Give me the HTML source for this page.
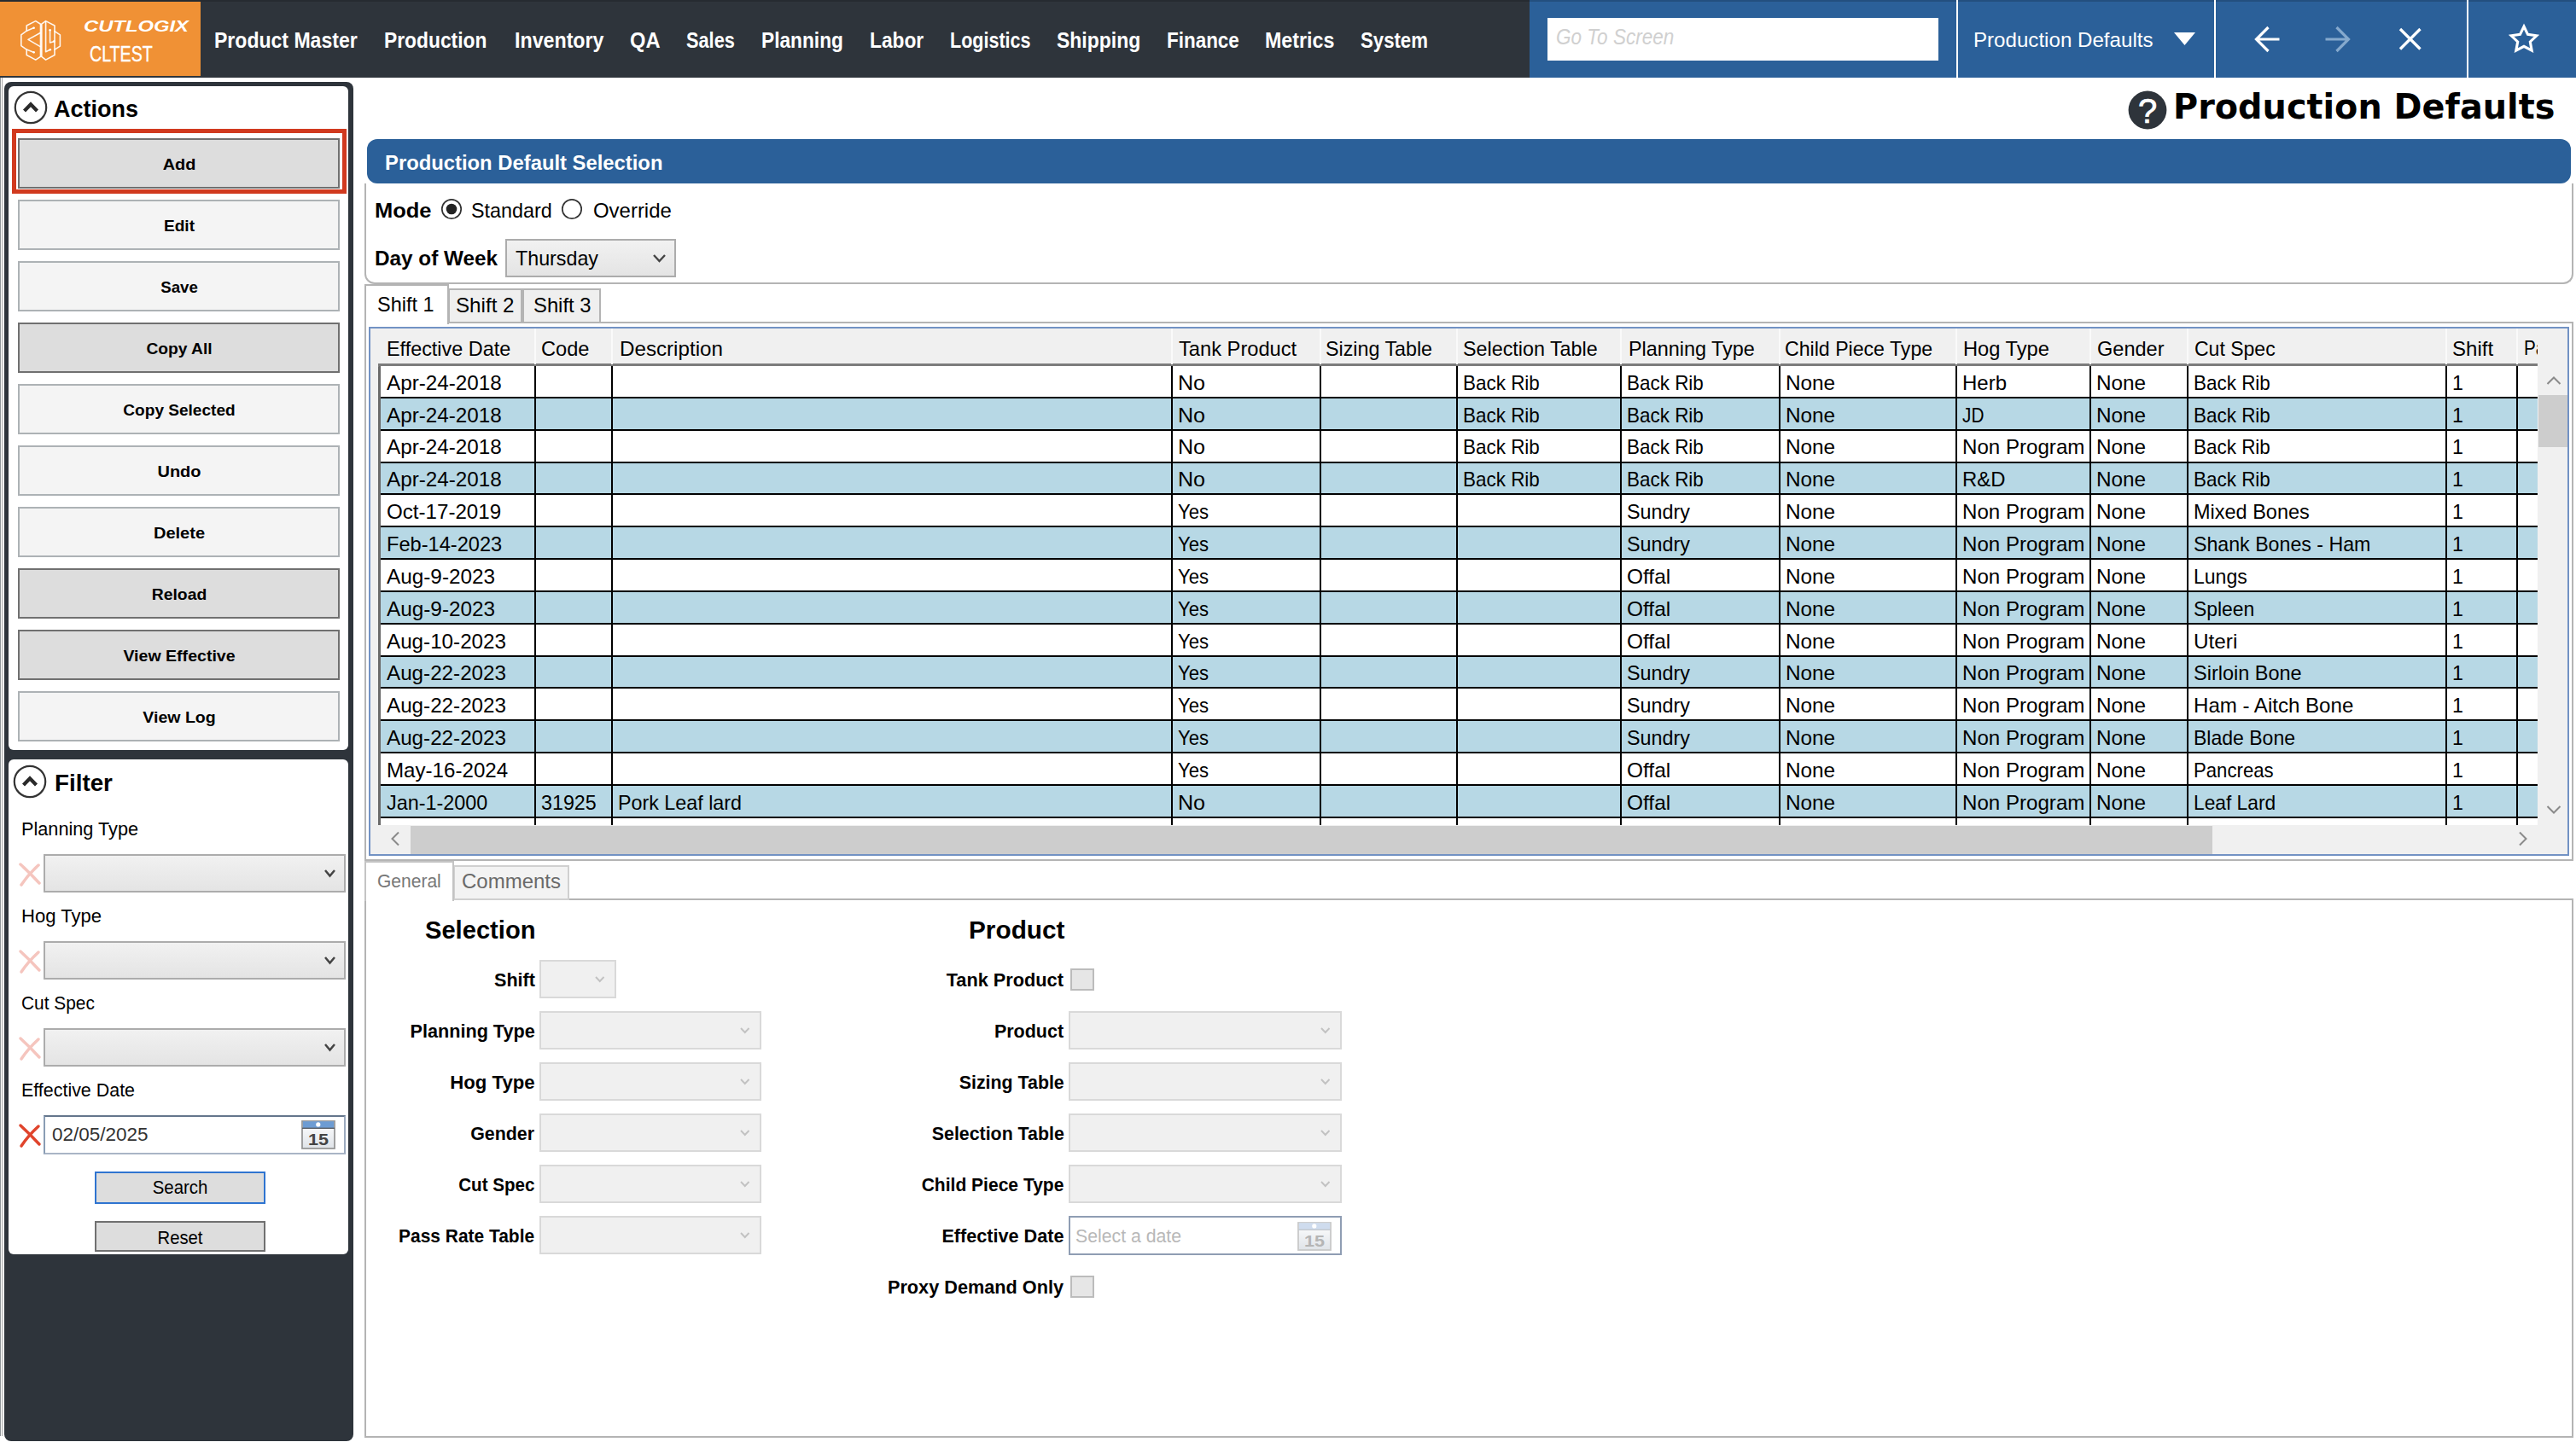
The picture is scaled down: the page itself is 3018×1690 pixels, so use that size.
<!DOCTYPE html>
<html><head><meta charset="utf-8"><title>Production Defaults</title>
<style>
html,body{margin:0;padding:0;background:#fff}
body{width:3018px;height:1690px;position:relative;overflow:hidden;font-family:"Liberation Sans",sans-serif}
body div,body svg{position:absolute}
.t{white-space:nowrap;line-height:1}
</style></head><body>
<div style="left:0px;top:0px;width:3018px;height:91px;background:#2e343b"></div>
<div style="left:0px;top:2px;width:235px;height:87px;background:#f09135"></div>
<div style="left:1792px;top:0px;width:1226px;height:91px;background:#2b6099"></div>
<svg style="left:14px;top:14px" width="70" height="68" viewBox="0 0 70 68" fill="none" stroke="#fff" stroke-opacity=".92" stroke-width="1.6" stroke-linejoin="round" stroke-linecap="round">
<path d="M27.8 10.6 L33.5 14.2 L33.5 52.4 L27.8 56.1 L17.2 50.5 L17.2 44.1 L10.8 39.6 L10.8 26.9 L17.2 22.2 L17.2 16 Z"/>
<path d="M39.6 10.6 L34.8 14.2 L34.8 52.4 L39.6 56.1 L50 50.5 L50 44.1 L56.4 40.1 L56.4 26.9 L50 22.6 L50 16 Z"/>
<path d="M17.2 22.2 L25.8 18.6 M33.2 24.5 L19 32.4 L33.2 40.6 M17.2 44.1 L25.8 47.4"/>
<path d="M39.6 11.5 L39.6 46.7 L45.2 44"/>
<path d="M44.6 21.2 L44.6 36 L49.6 34.4 M50 22.6 L50 44.1"/>
<circle cx="25.6" cy="18.8" r="1.3" fill="#fff" stroke="none"/><circle cx="25.6" cy="47.3" r="1.3" fill="#fff" stroke="none"/>
<circle cx="44.6" cy="21.2" r="1.3" fill="#fff" stroke="none"/><circle cx="49.4" cy="34.4" r="1.3" fill="#fff" stroke="none"/><circle cx="44.8" cy="44.2" r="1.3" fill="#fff" stroke="none"/>
</svg>
<div class="t" style="left:98.0px;top:21.5px;font-family:'Liberation Sans',sans-serif;font-weight:700;font-style:italic;font-size:18.5px;color:#fff;transform:scaleX(1.2861);transform-origin:0 0;">CUTLOGIX</div>
<div class="t" style="left:105.0px;top:50.6px;font-family:'Liberation Sans',sans-serif;font-weight:400;font-style:normal;font-size:25px;color:#fff;transform:scaleX(0.7838);transform-origin:0 0;-webkit-text-stroke:.35px #fff;">CLTEST</div>
<div class="t" style="left:251.0px;top:35.1px;font-family:'Liberation Sans',sans-serif;font-weight:700;font-style:normal;font-size:25px;color:#fff;transform:scaleX(0.9214);transform-origin:0 0;">Product Master</div>
<div class="t" style="left:450.0px;top:35.1px;font-family:'Liberation Sans',sans-serif;font-weight:700;font-style:normal;font-size:25px;color:#fff;transform:scaleX(0.9123);transform-origin:0 0;">Production</div>
<div class="t" style="left:602.7px;top:35.1px;font-family:'Liberation Sans',sans-serif;font-weight:700;font-style:normal;font-size:25px;color:#fff;transform:scaleX(0.9286);transform-origin:0 0;">Inventory</div>
<div class="t" style="left:738.4px;top:35.1px;font-family:'Liberation Sans',sans-serif;font-weight:700;font-style:normal;font-size:25px;color:#fff;transform:scaleX(0.9472);transform-origin:0 0;">QA</div>
<div class="t" style="left:804.0px;top:35.1px;font-family:'Liberation Sans',sans-serif;font-weight:700;font-style:normal;font-size:25px;color:#fff;transform:scaleX(0.8695);transform-origin:0 0;">Sales</div>
<div class="t" style="left:891.5px;top:35.1px;font-family:'Liberation Sans',sans-serif;font-weight:700;font-style:normal;font-size:25px;color:#fff;transform:scaleX(0.9082);transform-origin:0 0;">Planning</div>
<div class="t" style="left:1018.6px;top:35.1px;font-family:'Liberation Sans',sans-serif;font-weight:700;font-style:normal;font-size:25px;color:#fff;transform:scaleX(0.9095);transform-origin:0 0;">Labor</div>
<div class="t" style="left:1112.6px;top:35.1px;font-family:'Liberation Sans',sans-serif;font-weight:700;font-style:normal;font-size:25px;color:#fff;transform:scaleX(0.8610);transform-origin:0 0;">Logistics</div>
<div class="t" style="left:1238.0px;top:35.1px;font-family:'Liberation Sans',sans-serif;font-weight:700;font-style:normal;font-size:25px;color:#fff;transform:scaleX(0.9182);transform-origin:0 0;">Shipping</div>
<div class="t" style="left:1367.0px;top:35.1px;font-family:'Liberation Sans',sans-serif;font-weight:700;font-style:normal;font-size:25px;color:#fff;transform:scaleX(0.8981);transform-origin:0 0;">Finance</div>
<div class="t" style="left:1482.3px;top:35.1px;font-family:'Liberation Sans',sans-serif;font-weight:700;font-style:normal;font-size:25px;color:#fff;transform:scaleX(0.9298);transform-origin:0 0;">Metrics</div>
<div class="t" style="left:1594.2px;top:35.1px;font-family:'Liberation Sans',sans-serif;font-weight:700;font-style:normal;font-size:25px;color:#fff;transform:scaleX(0.8875);transform-origin:0 0;">System</div>
<div style="left:0px;top:0px;width:3018px;height:1.5px;background:rgba(0,0,0,.17)"></div>
<div style="left:1813px;top:20.5px;width:458px;height:50.5px;background:#fff"></div>
<div class="t" style="left:1822.5px;top:31.1px;font-family:'Liberation Sans',sans-serif;font-weight:400;font-style:italic;font-size:25px;color:#d0d0d0;transform:scaleX(0.9023);transform-origin:0 0;">Go To Screen</div>
<div style="left:2292px;top:0px;width:2px;height:91px;background:#fff"></div>
<div style="left:2594px;top:0px;width:2px;height:91px;background:#fff"></div>
<div style="left:2890px;top:0px;width:2px;height:91px;background:#fff"></div>
<div class="t" style="left:2312.0px;top:34.7px;font-family:'Liberation Sans',sans-serif;font-weight:400;font-style:normal;font-size:24px;color:#fff;transform:scaleX(1.0050);transform-origin:0 0;">Production Defaults</div>
<svg style="left:2546px;top:37px" width="28" height="18" viewBox="0 0 28 18"><path d="M1 1 L26 1 L13.5 16 Z" fill="#fff"/></svg>
<svg style="left:2640px;top:29px" width="32" height="34" viewBox="0 0 32 34" fill="none" stroke="#fff" stroke-width="3.2"><path d="M30.5 17 H4 M17.5 3 L3.5 17 L17.5 31"/></svg>
<svg style="left:2723px;top:29px" width="32" height="34" viewBox="0 0 32 34" fill="none" stroke="#85a9cd" stroke-width="3.2"><path d="M1.5 17 H28 M14.5 3 L28.5 17 L14.5 31"/></svg>
<svg style="left:2809px;top:31px" width="30" height="30" viewBox="0 0 30 30" fill="none" stroke="#fff" stroke-width="3.3"><path d="M3 3 L26.5 26.5 M26.5 3 L3 26.5"/></svg>
<svg style="left:2935px;top:24px" width="44" height="44" viewBox="0 0 44 44" fill="none" stroke="#fff" stroke-width="3.1" stroke-linejoin="miter"><path d="M22.0 7.0 L26.5 16.4 L36.8 17.8 L29.3 25.0 L31.2 35.2 L22.0 30.3 L12.8 35.2 L14.7 25.0 L7.2 17.8 L17.5 16.4 Z"/></svg>
<div style="left:0px;top:91px;width:1px;height:1592px;background:#8f9497"></div>
<div style="left:2px;top:91px;width:1px;height:1592px;background:#a6a6a6"></div>
<div style="left:4.7px;top:95.5px;width:409.4px;height:1593px;background:#2e343b;border-radius:8px"></div>
<div style="left:10.3px;top:101px;width:398px;height:778px;background:#fff;border-radius:6px"></div>
<div style="left:10.3px;top:890.3px;width:398px;height:579.7px;background:#fff;border-radius:6px"></div>
<svg style="left:14.5px;top:105.3px" width="42" height="42" viewBox="0 0 42 42" fill="none"><circle cx="21" cy="21" r="18.2" stroke="#333" stroke-width="2.2"/><path d="M13.5 25 L21 17.2 L28.5 25" stroke="#2a2a2a" stroke-width="4.2"/></svg>
<div class="t" style="left:62.5px;top:114.1px;font-family:'Liberation Sans',sans-serif;font-weight:700;font-style:normal;font-size:28px;color:#000;transform:scaleX(0.9637);transform-origin:0 0;">Actions</div>
<svg style="left:14.299999999999997px;top:895px" width="42" height="42" viewBox="0 0 42 42" fill="none"><circle cx="21" cy="21" r="18.2" stroke="#333" stroke-width="2.2"/><path d="M13.5 25 L21 17.2 L28.5 25" stroke="#2a2a2a" stroke-width="4.2"/></svg>
<div class="t" style="left:63.6px;top:903.9px;font-family:'Liberation Sans',sans-serif;font-weight:700;font-style:normal;font-size:28px;color:#000;transform:scaleX(0.9917);transform-origin:0 0;">Filter</div>
<div style="left:14px;top:151px;width:392px;height:76px;border:5px solid #d13a1f;box-sizing:border-box"></div>
<div style="left:21px;top:162px;width:377px;height:59px;background:#ddd;border:2px solid #707070;box-sizing:border-box"></div>
<div class="t" style="left:-790.5px;width:2000px;text-align:center;top:182.5px;font-family:'Liberation Sans',sans-serif;font-weight:700;font-style:normal;font-size:19px;color:#000;transform:scaleX(1.0460);transform-origin:50% 0;">Add</div>
<div style="left:21px;top:234px;width:377px;height:59px;background:#f4f4f4;border:2px solid #adb2b5;box-sizing:border-box"></div>
<div class="t" style="left:-790.5px;width:2000px;text-align:center;top:254.5px;font-family:'Liberation Sans',sans-serif;font-weight:700;font-style:normal;font-size:19px;color:#000;transform:scaleX(1.0055);transform-origin:50% 0;">Edit</div>
<div style="left:21px;top:306px;width:377px;height:59px;background:#f4f4f4;border:2px solid #adb2b5;box-sizing:border-box"></div>
<div class="t" style="left:-790.5px;width:2000px;text-align:center;top:326.5px;font-family:'Liberation Sans',sans-serif;font-weight:700;font-style:normal;font-size:19px;color:#000;transform:scaleX(0.9824);transform-origin:50% 0;">Save</div>
<div style="left:21px;top:378px;width:377px;height:59px;background:#ddd;border:2px solid #707070;box-sizing:border-box"></div>
<div class="t" style="left:-790.5px;width:2000px;text-align:center;top:398.5px;font-family:'Liberation Sans',sans-serif;font-weight:700;font-style:normal;font-size:19px;color:#000;transform:scaleX(1.0107);transform-origin:50% 0;">Copy All</div>
<div style="left:21px;top:450px;width:377px;height:59px;background:#f4f4f4;border:2px solid #adb2b5;box-sizing:border-box"></div>
<div class="t" style="left:-790.5px;width:2000px;text-align:center;top:470.5px;font-family:'Liberation Sans',sans-serif;font-weight:700;font-style:normal;font-size:19px;color:#000;transform:scaleX(1.0027);transform-origin:50% 0;">Copy Selected</div>
<div style="left:21px;top:522px;width:377px;height:59px;background:#f4f4f4;border:2px solid #adb2b5;box-sizing:border-box"></div>
<div class="t" style="left:-790.5px;width:2000px;text-align:center;top:542.5px;font-family:'Liberation Sans',sans-serif;font-weight:700;font-style:normal;font-size:19px;color:#000;transform:scaleX(1.0514);transform-origin:50% 0;">Undo</div>
<div style="left:21px;top:594px;width:377px;height:59px;background:#f4f4f4;border:2px solid #adb2b5;box-sizing:border-box"></div>
<div class="t" style="left:-790.5px;width:2000px;text-align:center;top:614.5px;font-family:'Liberation Sans',sans-serif;font-weight:700;font-style:normal;font-size:19px;color:#000;transform:scaleX(1.0555);transform-origin:50% 0;">Delete</div>
<div style="left:21px;top:666px;width:377px;height:59px;background:#ddd;border:2px solid #707070;box-sizing:border-box"></div>
<div class="t" style="left:-790.5px;width:2000px;text-align:center;top:686.5px;font-family:'Liberation Sans',sans-serif;font-weight:700;font-style:normal;font-size:19px;color:#000;transform:scaleX(1.0175);transform-origin:50% 0;">Reload</div>
<div style="left:21px;top:738px;width:377px;height:59px;background:#ddd;border:2px solid #707070;box-sizing:border-box"></div>
<div class="t" style="left:-790.5px;width:2000px;text-align:center;top:758.5px;font-family:'Liberation Sans',sans-serif;font-weight:700;font-style:normal;font-size:19px;color:#000;transform:scaleX(1.0299);transform-origin:50% 0;">View Effective</div>
<div style="left:21px;top:810px;width:377px;height:59px;background:#f4f4f4;border:2px solid #adb2b5;box-sizing:border-box"></div>
<div class="t" style="left:-790.5px;width:2000px;text-align:center;top:830.5px;font-family:'Liberation Sans',sans-serif;font-weight:700;font-style:normal;font-size:19px;color:#000;transform:scaleX(1.0283);transform-origin:50% 0;">View Log</div>
<div class="t" style="left:25.3px;top:960.9px;font-family:'Liberation Sans',sans-serif;font-weight:400;font-style:normal;font-size:22px;color:#000;transform:scaleX(0.9856);transform-origin:0 0;">Planning Type</div>
<div class="t" style="left:25.3px;top:1062.9px;font-family:'Liberation Sans',sans-serif;font-weight:400;font-style:normal;font-size:22px;color:#000;transform:scaleX(1.0031);transform-origin:0 0;">Hog Type</div>
<div class="t" style="left:25.3px;top:1164.9px;font-family:'Liberation Sans',sans-serif;font-weight:400;font-style:normal;font-size:22px;color:#000;transform:scaleX(0.9484);transform-origin:0 0;">Cut Spec</div>
<div class="t" style="left:25.3px;top:1267.4px;font-family:'Liberation Sans',sans-serif;font-weight:400;font-style:normal;font-size:22px;color:#000;transform:scaleX(0.9740);transform-origin:0 0;">Effective Date</div>
<svg style="left:21px;top:1010px" width="28" height="30" viewBox="0 0 28 30" fill="none" stroke="#f5c5be" stroke-width="3.5" stroke-linecap="round"><path d="M3 3 Q14 13 25 25 M24 4 Q12 15 4 27"/></svg>
<div style="left:51px;top:1001px;width:354px;height:45px;background:linear-gradient(#f1f1f1,#e4e4e4);border:2px solid #acacac;box-sizing:border-box"></div>
<svg style="left:378.5px;top:1017.5px" width="15" height="11.5" viewBox="0 0 15 11.5" fill="none" stroke="#444" stroke-width="2.5"><path d="M2 2 L7.5 8.5 L13 2"/></svg>
<svg style="left:21px;top:1112px" width="28" height="30" viewBox="0 0 28 30" fill="none" stroke="#f5c5be" stroke-width="3.5" stroke-linecap="round"><path d="M3 3 Q14 13 25 25 M24 4 Q12 15 4 27"/></svg>
<div style="left:51px;top:1103px;width:354px;height:45px;background:linear-gradient(#f1f1f1,#e4e4e4);border:2px solid #acacac;box-sizing:border-box"></div>
<svg style="left:378.5px;top:1119.5px" width="15" height="11.5" viewBox="0 0 15 11.5" fill="none" stroke="#444" stroke-width="2.5"><path d="M2 2 L7.5 8.5 L13 2"/></svg>
<svg style="left:21px;top:1214px" width="28" height="30" viewBox="0 0 28 30" fill="none" stroke="#f5c5be" stroke-width="3.5" stroke-linecap="round"><path d="M3 3 Q14 13 25 25 M24 4 Q12 15 4 27"/></svg>
<div style="left:51px;top:1205px;width:354px;height:45px;background:linear-gradient(#f1f1f1,#e4e4e4);border:2px solid #acacac;box-sizing:border-box"></div>
<svg style="left:378.5px;top:1221.5px" width="15" height="11.5" viewBox="0 0 15 11.5" fill="none" stroke="#444" stroke-width="2.5"><path d="M2 2 L7.5 8.5 L13 2"/></svg>
<svg style="left:21px;top:1316px" width="28" height="30" viewBox="0 0 28 30" fill="none" stroke="#e0442c" stroke-width="3.5" stroke-linecap="round"><path d="M3 3 Q14 13 25 25 M24 4 Q12 15 4 27"/></svg>
<div style="left:51px;top:1307px;width:354px;height:46px;background:#fff;border:2px solid #8a9db5;border-top-color:#64768c;border-bottom-color:#a9b5c6;border-right-color:#9dabbf;box-sizing:border-box"></div>
<div class="t" style="left:60.5px;top:1318.9px;font-family:'Liberation Sans',sans-serif;font-weight:400;font-style:normal;font-size:22px;color:#333;transform:scaleX(1.0220);transform-origin:0 0;">02/05/2025</div>
<svg style="left:352.5px;top:1313px" width="40" height="34" viewBox="0 0 40 34"><defs><linearGradient id="cg0" x1="0" y1="0" x2="0" y2="1"><stop offset="0" stop-color="#fff"/><stop offset="1" stop-color="#dfe3e8"/></linearGradient></defs><rect x="1" y="1" width="38" height="32" fill="url(#cg0)" stroke="#979797" stroke-width="1.8"/><rect x="1.9" y="1.2" width="36.2" height="7.8" fill="#6d9cd3"/><rect x="1" y="8.6" width="38" height="1.4" fill="#5a6068"/><circle cx="19.8" cy="4.9" r="2.6" fill="#fff"/><text x="20" y="29.2" text-anchor="middle" font-family="Liberation Sans,sans-serif" font-weight="700" font-size="19" fill="#444" textLength="24" lengthAdjust="spacingAndGlyphs">15</text></svg>
<div style="left:111px;top:1373px;width:200px;height:38px;background:#ddd;border:2px solid #2f74d0;box-sizing:border-box"></div>
<div class="t" style="left:-789.0px;width:2000px;text-align:center;top:1381.4px;font-family:'Liberation Sans',sans-serif;font-weight:400;font-style:normal;font-size:22px;color:#000;transform:scaleX(0.9273);transform-origin:50% 0;">Search</div>
<div style="left:111px;top:1431px;width:200px;height:36px;background:#ddd;border:2px solid #707070;box-sizing:border-box"></div>
<div class="t" style="left:-789.0px;width:2000px;text-align:center;top:1439.9px;font-family:'Liberation Sans',sans-serif;font-weight:400;font-style:normal;font-size:22px;color:#000;transform:scaleX(0.9215);transform-origin:50% 0;">Reset</div>
<svg style="left:2493px;top:106px" width="46" height="46" viewBox="0 0 46 46"><circle cx="23" cy="23" r="22.4" fill="#2e343b"/><text x="23.2" y="37.8" text-anchor="middle" font-family="Liberation Sans,sans-serif" font-weight="400" font-size="40" fill="#fff" stroke="#fff" stroke-width=".7">?</text></svg>
<div class="t" style="left:2545.5px;top:105.3px;font-family:'DejaVu Sans',sans-serif;font-weight:700;font-style:normal;font-size:40.2px;color:#000;transform:scaleX(0.9897);transform-origin:0 0;">Production Defaults</div>
<div style="left:430px;top:163px;width:2582px;height:52px;background:#2b6099;border-radius:12px"></div>
<div class="t" style="left:451.0px;top:178.8px;font-family:'Liberation Sans',sans-serif;font-weight:700;font-style:normal;font-size:24.5px;color:#fff;transform:scaleX(0.9719);transform-origin:0 0;">Production Default Selection</div>
<div style="left:427px;top:215px;width:2588px;height:118px;border:2px solid #b4b4b4;border-top:none;border-radius:0 0 12px 12px;box-sizing:border-box"></div>
<div class="t" style="left:439.0px;top:235.1px;font-family:'Liberation Sans',sans-serif;font-weight:700;font-style:normal;font-size:24px;color:#000;transform:scaleX(1.0611);transform-origin:0 0;">Mode</div>
<svg style="left:515.6px;top:232.4px" width="26" height="26" viewBox="0 0 26 26"><circle cx="13" cy="13" r="11.2" fill="#fff" stroke="#333" stroke-width="1.7"/><circle cx="13" cy="13" r="6.3" fill="#222"/></svg>
<div class="t" style="left:552.0px;top:235.1px;font-family:'Liberation Sans',sans-serif;font-weight:400;font-style:normal;font-size:24px;color:#000;transform:scaleX(0.9718);transform-origin:0 0;">Standard</div>
<svg style="left:657.2px;top:232.4px" width="26" height="26" viewBox="0 0 26 26"><circle cx="13" cy="13" r="11.2" fill="#fff" stroke="#333" stroke-width="1.7"/></svg>
<div class="t" style="left:694.7px;top:235.1px;font-family:'Liberation Sans',sans-serif;font-weight:400;font-style:normal;font-size:24px;color:#000;transform:scaleX(0.9975);transform-origin:0 0;">Override</div>
<div class="t" style="left:439.0px;top:291.2px;font-family:'Liberation Sans',sans-serif;font-weight:700;font-style:normal;font-size:24px;color:#000;transform:scaleX(1.0122);transform-origin:0 0;">Day of Week</div>
<div style="left:592px;top:280px;width:200px;height:45px;background:linear-gradient(#f1f1f1,#e4e4e4);border:2px solid #acacac;box-sizing:border-box"></div>
<div class="t" style="left:604.0px;top:291.2px;font-family:'Liberation Sans',sans-serif;font-weight:400;font-style:normal;font-size:24px;color:#000;transform:scaleX(0.9691);transform-origin:0 0;">Thursday</div>
<svg style="left:764px;top:297px" width="17" height="12" viewBox="0 0 17 12" fill="none" stroke="#444" stroke-width="2.4"><path d="M2 2 L8.5 9 L15 2"/></svg>
<div style="left:427px;top:377px;width:2588px;height:2px;background:#b4b4b4"></div>
<div style="left:525px;top:338px;width:87px;height:41px;background:#efefef;border:2px solid #b4b4b4;box-sizing:border-box"></div>
<div style="left:612px;top:338px;width:92px;height:41px;background:#efefef;border:2px solid #b4b4b4;box-sizing:border-box"></div>
<div style="left:427px;top:333px;width:99px;height:47px;background:#fff;border:2px solid #b4b4b4;border-bottom:none;box-sizing:border-box"></div>
<div class="t" style="left:442.3px;top:344.7px;font-family:'Liberation Sans',sans-serif;font-weight:400;font-style:normal;font-size:24px;color:#000;transform:scaleX(0.9769);transform-origin:0 0;">Shift 1</div>
<div class="t" style="left:533.5px;top:346.1px;font-family:'Liberation Sans',sans-serif;font-weight:400;font-style:normal;font-size:24px;color:#000;transform:scaleX(1.0069);transform-origin:0 0;">Shift 2</div>
<div class="t" style="left:624.8px;top:346.1px;font-family:'Liberation Sans',sans-serif;font-weight:400;font-style:normal;font-size:24px;color:#000;transform:scaleX(0.9919);transform-origin:0 0;">Shift 3</div>
<div style="left:427px;top:379px;width:2px;height:630px;background:#b4b4b4"></div>
<div style="left:3013px;top:379px;width:2px;height:630px;background:#b4b4b4"></div>
<div style="left:427px;top:1007px;width:2588px;height:2px;background:#b4b4b4"></div>
<div style="left:432px;top:383px;width:2578px;height:620px;background:#fff;border:2px solid #7292c4;box-sizing:border-box"></div>
<div style="left:434px;top:385px;width:2574px;height:42px;background:#f0f0f0"></div>
<div style="left:434px;top:427px;width:2539px;height:540px;overflow:hidden">
<div style="left:12px;top:38.85000000000002px;width:2527px;height:38px;background:#b7d8e5"></div>
<div style="left:12px;top:114.54999999999995px;width:2527px;height:38px;background:#b7d8e5"></div>
<div style="left:12px;top:190.25px;width:2527px;height:38px;background:#b7d8e5"></div>
<div style="left:12px;top:265.95000000000005px;width:2527px;height:38px;background:#b7d8e5"></div>
<div style="left:12px;top:341.6500000000001px;width:2527px;height:38px;background:#b7d8e5"></div>
<div style="left:12px;top:417.35px;width:2527px;height:38px;background:#b7d8e5"></div>
<div style="left:12px;top:493.04999999999995px;width:2527px;height:38px;background:#b7d8e5"></div>
<div style="left:12px;top:37.80000000000001px;width:2527px;height:2px;background:#000"></div>
<div style="left:12px;top:75.65000000000003px;width:2527px;height:2px;background:#000"></div>
<div style="left:12px;top:113.5px;width:2527px;height:2px;background:#000"></div>
<div style="left:12px;top:151.35000000000002px;width:2527px;height:2px;background:#000"></div>
<div style="left:12px;top:189.20000000000005px;width:2527px;height:2px;background:#000"></div>
<div style="left:12px;top:227.04999999999995px;width:2527px;height:2px;background:#000"></div>
<div style="left:12px;top:264.9000000000001px;width:2527px;height:2px;background:#000"></div>
<div style="left:12px;top:302.75px;width:2527px;height:2px;background:#000"></div>
<div style="left:12px;top:340.6px;width:2527px;height:2px;background:#000"></div>
<div style="left:12px;top:378.45000000000005px;width:2527px;height:2px;background:#000"></div>
<div style="left:12px;top:416.29999999999995px;width:2527px;height:2px;background:#000"></div>
<div style="left:12px;top:454.1500000000001px;width:2527px;height:2px;background:#000"></div>
<div style="left:12px;top:492.0px;width:2527px;height:2px;background:#000"></div>
<div style="left:12px;top:529.85px;width:2527px;height:2px;background:#000"></div>
<div style="left:12px;top:567.7px;width:2527px;height:2px;background:#000"></div>
<div style="left:192px;top:2px;width:2px;height:600px;background:#000"></div>
<div style="left:282px;top:2px;width:2px;height:600px;background:#000"></div>
<div style="left:938px;top:2px;width:2px;height:600px;background:#000"></div>
<div style="left:1112px;top:2px;width:2px;height:600px;background:#000"></div>
<div style="left:1272px;top:2px;width:2px;height:600px;background:#000"></div>
<div style="left:1464px;top:2px;width:2px;height:600px;background:#000"></div>
<div style="left:1650px;top:2px;width:2px;height:600px;background:#000"></div>
<div style="left:1857px;top:2px;width:2px;height:600px;background:#000"></div>
<div style="left:2014px;top:2px;width:2px;height:600px;background:#000"></div>
<div style="left:2128px;top:2px;width:2px;height:600px;background:#000"></div>
<div style="left:2431px;top:2px;width:2px;height:600px;background:#000"></div>
<div style="left:2514px;top:2px;width:2px;height:600px;background:#000"></div>
<div style="left:9px;top:1px;width:3px;height:600px;background:#6a6a6a;border-radius:2px 0 0 0"></div>
</div>
<div style="left:434px;top:426px;width:9px;height:541px;background:#f0f0f0"></div>
<div style="left:443px;top:426px;width:2530px;height:3px;background:#7c7c7c"></div>
<div class="t" style="left:453.1px;top:396.9px;font-family:'Liberation Sans',sans-serif;font-weight:400;font-style:normal;font-size:24px;color:#000;transform:scaleX(0.9744);transform-origin:0 0;">Effective Date</div>
<div class="t" style="left:633.7px;top:396.9px;font-family:'Liberation Sans',sans-serif;font-weight:400;font-style:normal;font-size:24px;color:#000;transform:scaleX(0.9843);transform-origin:0 0;">Code</div>
<div class="t" style="left:725.5px;top:396.9px;font-family:'Liberation Sans',sans-serif;font-weight:400;font-style:normal;font-size:24px;color:#000;transform:scaleX(1.0072);transform-origin:0 0;">Description</div>
<div class="t" style="left:1381.0px;top:396.9px;font-family:'Liberation Sans',sans-serif;font-weight:400;font-style:normal;font-size:24px;color:#000;transform:scaleX(0.9865);transform-origin:0 0;">Tank Product</div>
<div class="t" style="left:1553.4px;top:396.9px;font-family:'Liberation Sans',sans-serif;font-weight:400;font-style:normal;font-size:24px;color:#000;transform:scaleX(0.9696);transform-origin:0 0;">Sizing Table</div>
<div class="t" style="left:1714.0px;top:396.9px;font-family:'Liberation Sans',sans-serif;font-weight:400;font-style:normal;font-size:24px;color:#000;transform:scaleX(0.9711);transform-origin:0 0;">Selection Table</div>
<div class="t" style="left:1908.0px;top:396.9px;font-family:'Liberation Sans',sans-serif;font-weight:400;font-style:normal;font-size:24px;color:#000;transform:scaleX(0.9742);transform-origin:0 0;">Planning Type</div>
<div class="t" style="left:2091.3px;top:396.9px;font-family:'Liberation Sans',sans-serif;font-weight:400;font-style:normal;font-size:24px;color:#000;transform:scaleX(0.9637);transform-origin:0 0;">Child Piece Type</div>
<div class="t" style="left:2300.3px;top:396.9px;font-family:'Liberation Sans',sans-serif;font-weight:400;font-style:normal;font-size:24px;color:#000;transform:scaleX(0.9862);transform-origin:0 0;">Hog Type</div>
<div class="t" style="left:2457.0px;top:396.9px;font-family:'Liberation Sans',sans-serif;font-weight:400;font-style:normal;font-size:24px;color:#000;transform:scaleX(0.9803);transform-origin:0 0;">Gender</div>
<div class="t" style="left:2570.5px;top:396.9px;font-family:'Liberation Sans',sans-serif;font-weight:400;font-style:normal;font-size:24px;color:#000;transform:scaleX(0.9587);transform-origin:0 0;">Cut Spec</div>
<div class="t" style="left:2872.7px;top:396.9px;font-family:'Liberation Sans',sans-serif;font-weight:400;font-style:normal;font-size:24px;color:#000;transform:scaleX(1.0016);transform-origin:0 0;">Shift</div>
<div style="left:2950px;top:385px;width:23px;height:42px;overflow:hidden"><div class="t" style="left:6.5px;top:11.4px;font-family:'Liberation Sans',sans-serif;font-size:24px;transform:scaleX(.86);transform-origin:0 0">Pass Rate Table</div></div>
<div style="left:626px;top:385px;width:2px;height:42px;background:#fafafa"></div>
<div style="left:716px;top:385px;width:2px;height:42px;background:#fafafa"></div>
<div style="left:1372px;top:385px;width:2px;height:42px;background:#fafafa"></div>
<div style="left:1546px;top:385px;width:2px;height:42px;background:#fafafa"></div>
<div style="left:1706px;top:385px;width:2px;height:42px;background:#fafafa"></div>
<div style="left:1898px;top:385px;width:2px;height:42px;background:#fafafa"></div>
<div style="left:2084px;top:385px;width:2px;height:42px;background:#fafafa"></div>
<div style="left:2291px;top:385px;width:2px;height:42px;background:#fafafa"></div>
<div style="left:2448px;top:385px;width:2px;height:42px;background:#fafafa"></div>
<div style="left:2562px;top:385px;width:2px;height:42px;background:#fafafa"></div>
<div style="left:2865px;top:385px;width:2px;height:42px;background:#fafafa"></div>
<div style="left:2948px;top:385px;width:2px;height:42px;background:#fafafa"></div>
<div class="t" style="left:452.5px;top:436.7px;font-family:'Liberation Sans',sans-serif;font-weight:400;font-style:normal;font-size:24px;color:#000;transform:scaleX(1.0101);transform-origin:0 0;">Apr-24-2018</div>
<div class="t" style="left:1380.0px;top:436.7px;font-family:'Liberation Sans',sans-serif;font-weight:400;font-style:normal;font-size:24px;color:#000;transform:scaleX(1.0435);transform-origin:0 0;">No</div>
<div class="t" style="left:1714.0px;top:436.7px;font-family:'Liberation Sans',sans-serif;font-weight:400;font-style:normal;font-size:24px;color:#000;transform:scaleX(0.9354);transform-origin:0 0;">Back Rib</div>
<div class="t" style="left:1906.0px;top:436.7px;font-family:'Liberation Sans',sans-serif;font-weight:400;font-style:normal;font-size:24px;color:#000;transform:scaleX(0.9354);transform-origin:0 0;">Back Rib</div>
<div class="t" style="left:2092.0px;top:436.7px;font-family:'Liberation Sans',sans-serif;font-weight:400;font-style:normal;font-size:24px;color:#000;transform:scaleX(1.0133);transform-origin:0 0;">None</div>
<div class="t" style="left:2299.0px;top:436.7px;font-family:'Liberation Sans',sans-serif;font-weight:400;font-style:normal;font-size:24px;color:#000;transform:scaleX(1.0007);transform-origin:0 0;">Herb</div>
<div class="t" style="left:2456.0px;top:436.7px;font-family:'Liberation Sans',sans-serif;font-weight:400;font-style:normal;font-size:24px;color:#000;transform:scaleX(1.0133);transform-origin:0 0;">None</div>
<div class="t" style="left:2570.0px;top:436.7px;font-family:'Liberation Sans',sans-serif;font-weight:400;font-style:normal;font-size:24px;color:#000;transform:scaleX(0.9354);transform-origin:0 0;">Back Rib</div>
<div class="t" style="left:2873.0px;top:436.7px;font-family:'Liberation Sans',sans-serif;font-weight:400;font-style:normal;font-size:24px;color:#000;transform:scaleX(0.9693);transform-origin:0 0;">1</div>
<div class="t" style="left:452.5px;top:474.5px;font-family:'Liberation Sans',sans-serif;font-weight:400;font-style:normal;font-size:24px;color:#000;transform:scaleX(1.0101);transform-origin:0 0;">Apr-24-2018</div>
<div class="t" style="left:1380.0px;top:474.5px;font-family:'Liberation Sans',sans-serif;font-weight:400;font-style:normal;font-size:24px;color:#000;transform:scaleX(1.0435);transform-origin:0 0;">No</div>
<div class="t" style="left:1714.0px;top:474.5px;font-family:'Liberation Sans',sans-serif;font-weight:400;font-style:normal;font-size:24px;color:#000;transform:scaleX(0.9354);transform-origin:0 0;">Back Rib</div>
<div class="t" style="left:1906.0px;top:474.5px;font-family:'Liberation Sans',sans-serif;font-weight:400;font-style:normal;font-size:24px;color:#000;transform:scaleX(0.9354);transform-origin:0 0;">Back Rib</div>
<div class="t" style="left:2092.0px;top:474.5px;font-family:'Liberation Sans',sans-serif;font-weight:400;font-style:normal;font-size:24px;color:#000;transform:scaleX(1.0133);transform-origin:0 0;">None</div>
<div class="t" style="left:2299.0px;top:474.5px;font-family:'Liberation Sans',sans-serif;font-weight:400;font-style:normal;font-size:24px;color:#000;transform:scaleX(0.8658);transform-origin:0 0;">JD</div>
<div class="t" style="left:2456.0px;top:474.5px;font-family:'Liberation Sans',sans-serif;font-weight:400;font-style:normal;font-size:24px;color:#000;transform:scaleX(1.0133);transform-origin:0 0;">None</div>
<div class="t" style="left:2570.0px;top:474.5px;font-family:'Liberation Sans',sans-serif;font-weight:400;font-style:normal;font-size:24px;color:#000;transform:scaleX(0.9354);transform-origin:0 0;">Back Rib</div>
<div class="t" style="left:2873.0px;top:474.5px;font-family:'Liberation Sans',sans-serif;font-weight:400;font-style:normal;font-size:24px;color:#000;transform:scaleX(0.9693);transform-origin:0 0;">1</div>
<div class="t" style="left:452.5px;top:512.4px;font-family:'Liberation Sans',sans-serif;font-weight:400;font-style:normal;font-size:24px;color:#000;transform:scaleX(1.0101);transform-origin:0 0;">Apr-24-2018</div>
<div class="t" style="left:1380.0px;top:512.4px;font-family:'Liberation Sans',sans-serif;font-weight:400;font-style:normal;font-size:24px;color:#000;transform:scaleX(1.0435);transform-origin:0 0;">No</div>
<div class="t" style="left:1714.0px;top:512.4px;font-family:'Liberation Sans',sans-serif;font-weight:400;font-style:normal;font-size:24px;color:#000;transform:scaleX(0.9354);transform-origin:0 0;">Back Rib</div>
<div class="t" style="left:1906.0px;top:512.4px;font-family:'Liberation Sans',sans-serif;font-weight:400;font-style:normal;font-size:24px;color:#000;transform:scaleX(0.9354);transform-origin:0 0;">Back Rib</div>
<div class="t" style="left:2092.0px;top:512.4px;font-family:'Liberation Sans',sans-serif;font-weight:400;font-style:normal;font-size:24px;color:#000;transform:scaleX(1.0133);transform-origin:0 0;">None</div>
<div class="t" style="left:2299.0px;top:512.4px;font-family:'Liberation Sans',sans-serif;font-weight:400;font-style:normal;font-size:24px;color:#000;transform:scaleX(1.0047);transform-origin:0 0;">Non Program</div>
<div class="t" style="left:2456.0px;top:512.4px;font-family:'Liberation Sans',sans-serif;font-weight:400;font-style:normal;font-size:24px;color:#000;transform:scaleX(1.0133);transform-origin:0 0;">None</div>
<div class="t" style="left:2570.0px;top:512.4px;font-family:'Liberation Sans',sans-serif;font-weight:400;font-style:normal;font-size:24px;color:#000;transform:scaleX(0.9354);transform-origin:0 0;">Back Rib</div>
<div class="t" style="left:2873.0px;top:512.4px;font-family:'Liberation Sans',sans-serif;font-weight:400;font-style:normal;font-size:24px;color:#000;transform:scaleX(0.9693);transform-origin:0 0;">1</div>
<div class="t" style="left:452.5px;top:550.2px;font-family:'Liberation Sans',sans-serif;font-weight:400;font-style:normal;font-size:24px;color:#000;transform:scaleX(1.0101);transform-origin:0 0;">Apr-24-2018</div>
<div class="t" style="left:1380.0px;top:550.2px;font-family:'Liberation Sans',sans-serif;font-weight:400;font-style:normal;font-size:24px;color:#000;transform:scaleX(1.0435);transform-origin:0 0;">No</div>
<div class="t" style="left:1714.0px;top:550.2px;font-family:'Liberation Sans',sans-serif;font-weight:400;font-style:normal;font-size:24px;color:#000;transform:scaleX(0.9354);transform-origin:0 0;">Back Rib</div>
<div class="t" style="left:1906.0px;top:550.2px;font-family:'Liberation Sans',sans-serif;font-weight:400;font-style:normal;font-size:24px;color:#000;transform:scaleX(0.9354);transform-origin:0 0;">Back Rib</div>
<div class="t" style="left:2092.0px;top:550.2px;font-family:'Liberation Sans',sans-serif;font-weight:400;font-style:normal;font-size:24px;color:#000;transform:scaleX(1.0133);transform-origin:0 0;">None</div>
<div class="t" style="left:2299.0px;top:550.2px;font-family:'Liberation Sans',sans-serif;font-weight:400;font-style:normal;font-size:24px;color:#000;transform:scaleX(0.9947);transform-origin:0 0;">R&amp;D</div>
<div class="t" style="left:2456.0px;top:550.2px;font-family:'Liberation Sans',sans-serif;font-weight:400;font-style:normal;font-size:24px;color:#000;transform:scaleX(1.0133);transform-origin:0 0;">None</div>
<div class="t" style="left:2570.0px;top:550.2px;font-family:'Liberation Sans',sans-serif;font-weight:400;font-style:normal;font-size:24px;color:#000;transform:scaleX(0.9354);transform-origin:0 0;">Back Rib</div>
<div class="t" style="left:2873.0px;top:550.2px;font-family:'Liberation Sans',sans-serif;font-weight:400;font-style:normal;font-size:24px;color:#000;transform:scaleX(0.9693);transform-origin:0 0;">1</div>
<div class="t" style="left:452.5px;top:588.1px;font-family:'Liberation Sans',sans-serif;font-weight:400;font-style:normal;font-size:24px;color:#000;transform:scaleX(1.0054);transform-origin:0 0;">Oct-17-2019</div>
<div class="t" style="left:1380.0px;top:588.1px;font-family:'Liberation Sans',sans-serif;font-weight:400;font-style:normal;font-size:24px;color:#000;transform:scaleX(0.9195);transform-origin:0 0;">Yes</div>
<div class="t" style="left:1906.0px;top:588.1px;font-family:'Liberation Sans',sans-serif;font-weight:400;font-style:normal;font-size:24px;color:#000;transform:scaleX(0.9723);transform-origin:0 0;">Sundry</div>
<div class="t" style="left:2092.0px;top:588.1px;font-family:'Liberation Sans',sans-serif;font-weight:400;font-style:normal;font-size:24px;color:#000;transform:scaleX(1.0133);transform-origin:0 0;">None</div>
<div class="t" style="left:2299.0px;top:588.1px;font-family:'Liberation Sans',sans-serif;font-weight:400;font-style:normal;font-size:24px;color:#000;transform:scaleX(1.0047);transform-origin:0 0;">Non Program</div>
<div class="t" style="left:2456.0px;top:588.1px;font-family:'Liberation Sans',sans-serif;font-weight:400;font-style:normal;font-size:24px;color:#000;transform:scaleX(1.0133);transform-origin:0 0;">None</div>
<div class="t" style="left:2570.0px;top:588.1px;font-family:'Liberation Sans',sans-serif;font-weight:400;font-style:normal;font-size:24px;color:#000;transform:scaleX(0.9785);transform-origin:0 0;">Mixed Bones</div>
<div class="t" style="left:2873.0px;top:588.1px;font-family:'Liberation Sans',sans-serif;font-weight:400;font-style:normal;font-size:24px;color:#000;transform:scaleX(0.9693);transform-origin:0 0;">1</div>
<div class="t" style="left:452.5px;top:625.9px;font-family:'Liberation Sans',sans-serif;font-weight:400;font-style:normal;font-size:24px;color:#000;transform:scaleX(0.9838);transform-origin:0 0;">Feb-14-2023</div>
<div class="t" style="left:1380.0px;top:625.9px;font-family:'Liberation Sans',sans-serif;font-weight:400;font-style:normal;font-size:24px;color:#000;transform:scaleX(0.9195);transform-origin:0 0;">Yes</div>
<div class="t" style="left:1906.0px;top:625.9px;font-family:'Liberation Sans',sans-serif;font-weight:400;font-style:normal;font-size:24px;color:#000;transform:scaleX(0.9723);transform-origin:0 0;">Sundry</div>
<div class="t" style="left:2092.0px;top:625.9px;font-family:'Liberation Sans',sans-serif;font-weight:400;font-style:normal;font-size:24px;color:#000;transform:scaleX(1.0133);transform-origin:0 0;">None</div>
<div class="t" style="left:2299.0px;top:625.9px;font-family:'Liberation Sans',sans-serif;font-weight:400;font-style:normal;font-size:24px;color:#000;transform:scaleX(1.0047);transform-origin:0 0;">Non Program</div>
<div class="t" style="left:2456.0px;top:625.9px;font-family:'Liberation Sans',sans-serif;font-weight:400;font-style:normal;font-size:24px;color:#000;transform:scaleX(1.0133);transform-origin:0 0;">None</div>
<div class="t" style="left:2570.0px;top:625.9px;font-family:'Liberation Sans',sans-serif;font-weight:400;font-style:normal;font-size:24px;color:#000;transform:scaleX(0.9656);transform-origin:0 0;">Shank Bones - Ham</div>
<div class="t" style="left:2873.0px;top:625.9px;font-family:'Liberation Sans',sans-serif;font-weight:400;font-style:normal;font-size:24px;color:#000;transform:scaleX(0.9693);transform-origin:0 0;">1</div>
<div class="t" style="left:452.5px;top:663.8px;font-family:'Liberation Sans',sans-serif;font-weight:400;font-style:normal;font-size:24px;color:#000;transform:scaleX(1.0131);transform-origin:0 0;">Aug-9-2023</div>
<div class="t" style="left:1380.0px;top:663.8px;font-family:'Liberation Sans',sans-serif;font-weight:400;font-style:normal;font-size:24px;color:#000;transform:scaleX(0.9195);transform-origin:0 0;">Yes</div>
<div class="t" style="left:1906.0px;top:663.8px;font-family:'Liberation Sans',sans-serif;font-weight:400;font-style:normal;font-size:24px;color:#000;transform:scaleX(1.0177);transform-origin:0 0;">Offal</div>
<div class="t" style="left:2092.0px;top:663.8px;font-family:'Liberation Sans',sans-serif;font-weight:400;font-style:normal;font-size:24px;color:#000;transform:scaleX(1.0133);transform-origin:0 0;">None</div>
<div class="t" style="left:2299.0px;top:663.8px;font-family:'Liberation Sans',sans-serif;font-weight:400;font-style:normal;font-size:24px;color:#000;transform:scaleX(1.0047);transform-origin:0 0;">Non Program</div>
<div class="t" style="left:2456.0px;top:663.8px;font-family:'Liberation Sans',sans-serif;font-weight:400;font-style:normal;font-size:24px;color:#000;transform:scaleX(1.0133);transform-origin:0 0;">None</div>
<div class="t" style="left:2570.0px;top:663.8px;font-family:'Liberation Sans',sans-serif;font-weight:400;font-style:normal;font-size:24px;color:#000;transform:scaleX(0.9597);transform-origin:0 0;">Lungs</div>
<div class="t" style="left:2873.0px;top:663.8px;font-family:'Liberation Sans',sans-serif;font-weight:400;font-style:normal;font-size:24px;color:#000;transform:scaleX(0.9693);transform-origin:0 0;">1</div>
<div class="t" style="left:452.5px;top:701.6px;font-family:'Liberation Sans',sans-serif;font-weight:400;font-style:normal;font-size:24px;color:#000;transform:scaleX(1.0131);transform-origin:0 0;">Aug-9-2023</div>
<div class="t" style="left:1380.0px;top:701.6px;font-family:'Liberation Sans',sans-serif;font-weight:400;font-style:normal;font-size:24px;color:#000;transform:scaleX(0.9195);transform-origin:0 0;">Yes</div>
<div class="t" style="left:1906.0px;top:701.6px;font-family:'Liberation Sans',sans-serif;font-weight:400;font-style:normal;font-size:24px;color:#000;transform:scaleX(1.0177);transform-origin:0 0;">Offal</div>
<div class="t" style="left:2092.0px;top:701.6px;font-family:'Liberation Sans',sans-serif;font-weight:400;font-style:normal;font-size:24px;color:#000;transform:scaleX(1.0133);transform-origin:0 0;">None</div>
<div class="t" style="left:2299.0px;top:701.6px;font-family:'Liberation Sans',sans-serif;font-weight:400;font-style:normal;font-size:24px;color:#000;transform:scaleX(1.0047);transform-origin:0 0;">Non Program</div>
<div class="t" style="left:2456.0px;top:701.6px;font-family:'Liberation Sans',sans-serif;font-weight:400;font-style:normal;font-size:24px;color:#000;transform:scaleX(1.0133);transform-origin:0 0;">None</div>
<div class="t" style="left:2570.0px;top:701.6px;font-family:'Liberation Sans',sans-serif;font-weight:400;font-style:normal;font-size:24px;color:#000;transform:scaleX(0.9545);transform-origin:0 0;">Spleen</div>
<div class="t" style="left:2873.0px;top:701.6px;font-family:'Liberation Sans',sans-serif;font-weight:400;font-style:normal;font-size:24px;color:#000;transform:scaleX(0.9693);transform-origin:0 0;">1</div>
<div class="t" style="left:452.5px;top:739.5px;font-family:'Liberation Sans',sans-serif;font-weight:400;font-style:normal;font-size:24px;color:#000;transform:scaleX(1.0089);transform-origin:0 0;">Aug-10-2023</div>
<div class="t" style="left:1380.0px;top:739.5px;font-family:'Liberation Sans',sans-serif;font-weight:400;font-style:normal;font-size:24px;color:#000;transform:scaleX(0.9195);transform-origin:0 0;">Yes</div>
<div class="t" style="left:1906.0px;top:739.5px;font-family:'Liberation Sans',sans-serif;font-weight:400;font-style:normal;font-size:24px;color:#000;transform:scaleX(1.0177);transform-origin:0 0;">Offal</div>
<div class="t" style="left:2092.0px;top:739.5px;font-family:'Liberation Sans',sans-serif;font-weight:400;font-style:normal;font-size:24px;color:#000;transform:scaleX(1.0133);transform-origin:0 0;">None</div>
<div class="t" style="left:2299.0px;top:739.5px;font-family:'Liberation Sans',sans-serif;font-weight:400;font-style:normal;font-size:24px;color:#000;transform:scaleX(1.0047);transform-origin:0 0;">Non Program</div>
<div class="t" style="left:2456.0px;top:739.5px;font-family:'Liberation Sans',sans-serif;font-weight:400;font-style:normal;font-size:24px;color:#000;transform:scaleX(1.0133);transform-origin:0 0;">None</div>
<div class="t" style="left:2570.0px;top:739.5px;font-family:'Liberation Sans',sans-serif;font-weight:400;font-style:normal;font-size:24px;color:#000;transform:scaleX(1.0132);transform-origin:0 0;">Uteri</div>
<div class="t" style="left:2873.0px;top:739.5px;font-family:'Liberation Sans',sans-serif;font-weight:400;font-style:normal;font-size:24px;color:#000;transform:scaleX(0.9693);transform-origin:0 0;">1</div>
<div class="t" style="left:452.5px;top:777.3px;font-family:'Liberation Sans',sans-serif;font-weight:400;font-style:normal;font-size:24px;color:#000;transform:scaleX(1.0089);transform-origin:0 0;">Aug-22-2023</div>
<div class="t" style="left:1380.0px;top:777.3px;font-family:'Liberation Sans',sans-serif;font-weight:400;font-style:normal;font-size:24px;color:#000;transform:scaleX(0.9195);transform-origin:0 0;">Yes</div>
<div class="t" style="left:1906.0px;top:777.3px;font-family:'Liberation Sans',sans-serif;font-weight:400;font-style:normal;font-size:24px;color:#000;transform:scaleX(0.9723);transform-origin:0 0;">Sundry</div>
<div class="t" style="left:2092.0px;top:777.3px;font-family:'Liberation Sans',sans-serif;font-weight:400;font-style:normal;font-size:24px;color:#000;transform:scaleX(1.0133);transform-origin:0 0;">None</div>
<div class="t" style="left:2299.0px;top:777.3px;font-family:'Liberation Sans',sans-serif;font-weight:400;font-style:normal;font-size:24px;color:#000;transform:scaleX(1.0047);transform-origin:0 0;">Non Program</div>
<div class="t" style="left:2456.0px;top:777.3px;font-family:'Liberation Sans',sans-serif;font-weight:400;font-style:normal;font-size:24px;color:#000;transform:scaleX(1.0133);transform-origin:0 0;">None</div>
<div class="t" style="left:2570.0px;top:777.3px;font-family:'Liberation Sans',sans-serif;font-weight:400;font-style:normal;font-size:24px;color:#000;transform:scaleX(0.9789);transform-origin:0 0;">Sirloin Bone</div>
<div class="t" style="left:2873.0px;top:777.3px;font-family:'Liberation Sans',sans-serif;font-weight:400;font-style:normal;font-size:24px;color:#000;transform:scaleX(0.9693);transform-origin:0 0;">1</div>
<div class="t" style="left:452.5px;top:815.2px;font-family:'Liberation Sans',sans-serif;font-weight:400;font-style:normal;font-size:24px;color:#000;transform:scaleX(1.0089);transform-origin:0 0;">Aug-22-2023</div>
<div class="t" style="left:1380.0px;top:815.2px;font-family:'Liberation Sans',sans-serif;font-weight:400;font-style:normal;font-size:24px;color:#000;transform:scaleX(0.9195);transform-origin:0 0;">Yes</div>
<div class="t" style="left:1906.0px;top:815.2px;font-family:'Liberation Sans',sans-serif;font-weight:400;font-style:normal;font-size:24px;color:#000;transform:scaleX(0.9723);transform-origin:0 0;">Sundry</div>
<div class="t" style="left:2092.0px;top:815.2px;font-family:'Liberation Sans',sans-serif;font-weight:400;font-style:normal;font-size:24px;color:#000;transform:scaleX(1.0133);transform-origin:0 0;">None</div>
<div class="t" style="left:2299.0px;top:815.2px;font-family:'Liberation Sans',sans-serif;font-weight:400;font-style:normal;font-size:24px;color:#000;transform:scaleX(1.0047);transform-origin:0 0;">Non Program</div>
<div class="t" style="left:2456.0px;top:815.2px;font-family:'Liberation Sans',sans-serif;font-weight:400;font-style:normal;font-size:24px;color:#000;transform:scaleX(1.0133);transform-origin:0 0;">None</div>
<div class="t" style="left:2570.0px;top:815.2px;font-family:'Liberation Sans',sans-serif;font-weight:400;font-style:normal;font-size:24px;color:#000;transform:scaleX(1.0028);transform-origin:0 0;">Ham - Aitch Bone</div>
<div class="t" style="left:2873.0px;top:815.2px;font-family:'Liberation Sans',sans-serif;font-weight:400;font-style:normal;font-size:24px;color:#000;transform:scaleX(0.9693);transform-origin:0 0;">1</div>
<div class="t" style="left:452.5px;top:853.0px;font-family:'Liberation Sans',sans-serif;font-weight:400;font-style:normal;font-size:24px;color:#000;transform:scaleX(1.0089);transform-origin:0 0;">Aug-22-2023</div>
<div class="t" style="left:1380.0px;top:853.0px;font-family:'Liberation Sans',sans-serif;font-weight:400;font-style:normal;font-size:24px;color:#000;transform:scaleX(0.9195);transform-origin:0 0;">Yes</div>
<div class="t" style="left:1906.0px;top:853.0px;font-family:'Liberation Sans',sans-serif;font-weight:400;font-style:normal;font-size:24px;color:#000;transform:scaleX(0.9723);transform-origin:0 0;">Sundry</div>
<div class="t" style="left:2092.0px;top:853.0px;font-family:'Liberation Sans',sans-serif;font-weight:400;font-style:normal;font-size:24px;color:#000;transform:scaleX(1.0133);transform-origin:0 0;">None</div>
<div class="t" style="left:2299.0px;top:853.0px;font-family:'Liberation Sans',sans-serif;font-weight:400;font-style:normal;font-size:24px;color:#000;transform:scaleX(1.0047);transform-origin:0 0;">Non Program</div>
<div class="t" style="left:2456.0px;top:853.0px;font-family:'Liberation Sans',sans-serif;font-weight:400;font-style:normal;font-size:24px;color:#000;transform:scaleX(1.0133);transform-origin:0 0;">None</div>
<div class="t" style="left:2570.0px;top:853.0px;font-family:'Liberation Sans',sans-serif;font-weight:400;font-style:normal;font-size:24px;color:#000;transform:scaleX(0.9587);transform-origin:0 0;">Blade Bone</div>
<div class="t" style="left:2873.0px;top:853.0px;font-family:'Liberation Sans',sans-serif;font-weight:400;font-style:normal;font-size:24px;color:#000;transform:scaleX(0.9693);transform-origin:0 0;">1</div>
<div class="t" style="left:452.5px;top:890.9px;font-family:'Liberation Sans',sans-serif;font-weight:400;font-style:normal;font-size:24px;color:#000;transform:scaleX(1.0052);transform-origin:0 0;">May-16-2024</div>
<div class="t" style="left:1380.0px;top:890.9px;font-family:'Liberation Sans',sans-serif;font-weight:400;font-style:normal;font-size:24px;color:#000;transform:scaleX(0.9195);transform-origin:0 0;">Yes</div>
<div class="t" style="left:1906.0px;top:890.9px;font-family:'Liberation Sans',sans-serif;font-weight:400;font-style:normal;font-size:24px;color:#000;transform:scaleX(1.0177);transform-origin:0 0;">Offal</div>
<div class="t" style="left:2092.0px;top:890.9px;font-family:'Liberation Sans',sans-serif;font-weight:400;font-style:normal;font-size:24px;color:#000;transform:scaleX(1.0133);transform-origin:0 0;">None</div>
<div class="t" style="left:2299.0px;top:890.9px;font-family:'Liberation Sans',sans-serif;font-weight:400;font-style:normal;font-size:24px;color:#000;transform:scaleX(1.0047);transform-origin:0 0;">Non Program</div>
<div class="t" style="left:2456.0px;top:890.9px;font-family:'Liberation Sans',sans-serif;font-weight:400;font-style:normal;font-size:24px;color:#000;transform:scaleX(1.0133);transform-origin:0 0;">None</div>
<div class="t" style="left:2570.0px;top:890.9px;font-family:'Liberation Sans',sans-serif;font-weight:400;font-style:normal;font-size:24px;color:#000;transform:scaleX(0.9232);transform-origin:0 0;">Pancreas</div>
<div class="t" style="left:2873.0px;top:890.9px;font-family:'Liberation Sans',sans-serif;font-weight:400;font-style:normal;font-size:24px;color:#000;transform:scaleX(0.9693);transform-origin:0 0;">1</div>
<div class="t" style="left:452.5px;top:928.7px;font-family:'Liberation Sans',sans-serif;font-weight:400;font-style:normal;font-size:24px;color:#000;transform:scaleX(0.9737);transform-origin:0 0;">Jan-1-2000</div>
<div class="t" style="left:634.0px;top:928.7px;font-family:'Liberation Sans',sans-serif;font-weight:400;font-style:normal;font-size:24px;color:#000;transform:scaleX(0.9693);transform-origin:0 0;">31925</div>
<div class="t" style="left:724.0px;top:928.7px;font-family:'Liberation Sans',sans-serif;font-weight:400;font-style:normal;font-size:24px;color:#000;transform:scaleX(0.9706);transform-origin:0 0;">Pork Leaf lard</div>
<div class="t" style="left:1380.0px;top:928.7px;font-family:'Liberation Sans',sans-serif;font-weight:400;font-style:normal;font-size:24px;color:#000;transform:scaleX(1.0435);transform-origin:0 0;">No</div>
<div class="t" style="left:1906.0px;top:928.7px;font-family:'Liberation Sans',sans-serif;font-weight:400;font-style:normal;font-size:24px;color:#000;transform:scaleX(1.0177);transform-origin:0 0;">Offal</div>
<div class="t" style="left:2092.0px;top:928.7px;font-family:'Liberation Sans',sans-serif;font-weight:400;font-style:normal;font-size:24px;color:#000;transform:scaleX(1.0133);transform-origin:0 0;">None</div>
<div class="t" style="left:2299.0px;top:928.7px;font-family:'Liberation Sans',sans-serif;font-weight:400;font-style:normal;font-size:24px;color:#000;transform:scaleX(1.0047);transform-origin:0 0;">Non Program</div>
<div class="t" style="left:2456.0px;top:928.7px;font-family:'Liberation Sans',sans-serif;font-weight:400;font-style:normal;font-size:24px;color:#000;transform:scaleX(1.0133);transform-origin:0 0;">None</div>
<div class="t" style="left:2570.0px;top:928.7px;font-family:'Liberation Sans',sans-serif;font-weight:400;font-style:normal;font-size:24px;color:#000;transform:scaleX(0.9480);transform-origin:0 0;">Leaf Lard</div>
<div class="t" style="left:2873.0px;top:928.7px;font-family:'Liberation Sans',sans-serif;font-weight:400;font-style:normal;font-size:24px;color:#000;transform:scaleX(0.9693);transform-origin:0 0;">1</div>
<div style="left:2973px;top:427px;width:35px;height:540px;background:#f0f0f0"></div>
<div style="left:2974px;top:463px;width:34px;height:61px;background:#cdcdcd"></div>
<svg style="left:2983px;top:440px" width="18" height="12" viewBox="0 0 18 12" fill="none" stroke="#8a8a8a" stroke-width="2"><path d="M1.5 10 L9 2.5 L16.5 10"/></svg>
<svg style="left:2983px;top:943px" width="18" height="12" viewBox="0 0 18 12" fill="none" stroke="#8a8a8a" stroke-width="2"><path d="M1.5 2 L9 9.5 L16.5 2"/></svg>
<div style="left:434px;top:967px;width:2574px;height:34px;background:#f0f0f0"></div>
<div style="left:481px;top:968px;width:2111px;height:33px;background:#cdcdcd"></div>
<svg style="left:457px;top:974px" width="12" height="18" viewBox="0 0 12 18" fill="none" stroke="#8a8a8a" stroke-width="2"><path d="M10 1.5 L2.5 9 L10 16.5"/></svg>
<svg style="left:2950px;top:974px" width="12" height="18" viewBox="0 0 12 18" fill="none" stroke="#8a8a8a" stroke-width="2"><path d="M2 1.5 L9.5 9 L2 16.5"/></svg>
<div style="left:426.5px;top:1053px;width:2588.5px;height:631.6px;border:2px solid #b4b4b4;box-sizing:border-box;background:#fff"></div>
<div style="left:531px;top:1014px;width:136px;height:41px;background:#f3f3f3;border:2px solid #d0d0d0;box-sizing:border-box"></div>
<div style="left:427px;top:1009px;width:105px;height:47px;background:#fff;border:2px solid #c4c4c4;border-bottom:none;box-sizing:border-box"></div>
<div class="t" style="left:442.0px;top:1021.9px;font-family:'Liberation Sans',sans-serif;font-weight:400;font-style:normal;font-size:22px;color:#787878;transform:scaleX(0.9550);transform-origin:0 0;">General</div>
<div class="t" style="left:541.0px;top:1021.2px;font-family:'Liberation Sans',sans-serif;font-weight:400;font-style:normal;font-size:24px;color:#6a6a6a;transform:scaleX(0.9998);transform-origin:0 0;">Comments</div>
<div class="t" style="left:497.5px;top:1074.6px;font-family:'Liberation Sans',sans-serif;font-weight:700;font-style:normal;font-size:30px;color:#000;transform:scaleX(0.9706);transform-origin:0 0;">Selection</div>
<div class="t" style="left:1135.4px;top:1074.6px;font-family:'Liberation Sans',sans-serif;font-weight:700;font-style:normal;font-size:30px;color:#000;transform:scaleX(0.9925);transform-origin:0 0;">Product</div>
<div class="t" style="right:2391.5px;top:1138.4px;font-family:'Liberation Sans',sans-serif;font-weight:700;font-style:normal;font-size:22px;color:#000;transform:scaleX(0.9791);transform-origin:100% 0;">Shift</div>
<div style="left:632px;top:1125px;width:90px;height:45px;background:#f0f0f0;border:2px solid #d9d9d9;box-sizing:border-box"></div>
<svg style="left:695.5px;top:1142.5px" width="13.5" height="10" viewBox="0 0 13.5 10" fill="none" stroke="#c2c2c2" stroke-width="1.9"><path d="M2 2 L6.75 7 L11.5 2"/></svg>
<div class="t" style="right:2391.5px;top:1198.4px;font-family:'Liberation Sans',sans-serif;font-weight:700;font-style:normal;font-size:22px;color:#000;transform:scaleX(0.9825);transform-origin:100% 0;">Planning Type</div>
<div style="left:632px;top:1185px;width:260px;height:45px;background:#f0f0f0;border:2px solid #d9d9d9;box-sizing:border-box"></div>
<svg style="left:865.5px;top:1202.5px" width="13.5" height="10" viewBox="0 0 13.5 10" fill="none" stroke="#c2c2c2" stroke-width="1.9"><path d="M2 2 L6.75 7 L11.5 2"/></svg>
<div class="t" style="right:2391.5px;top:1258.4px;font-family:'Liberation Sans',sans-serif;font-weight:700;font-style:normal;font-size:22px;color:#000;transform:scaleX(1.0071);transform-origin:100% 0;">Hog Type</div>
<div style="left:632px;top:1245px;width:260px;height:45px;background:#f0f0f0;border:2px solid #d9d9d9;box-sizing:border-box"></div>
<svg style="left:865.5px;top:1262.5px" width="13.5" height="10" viewBox="0 0 13.5 10" fill="none" stroke="#c2c2c2" stroke-width="1.9"><path d="M2 2 L6.75 7 L11.5 2"/></svg>
<div class="t" style="right:2391.5px;top:1318.4px;font-family:'Liberation Sans',sans-serif;font-weight:700;font-style:normal;font-size:22px;color:#000;transform:scaleX(0.9713);transform-origin:100% 0;">Gender</div>
<div style="left:632px;top:1305px;width:260px;height:45px;background:#f0f0f0;border:2px solid #d9d9d9;box-sizing:border-box"></div>
<svg style="left:865.5px;top:1322.5px" width="13.5" height="10" viewBox="0 0 13.5 10" fill="none" stroke="#c2c2c2" stroke-width="1.9"><path d="M2 2 L6.75 7 L11.5 2"/></svg>
<div class="t" style="right:2391.5px;top:1378.4px;font-family:'Liberation Sans',sans-serif;font-weight:700;font-style:normal;font-size:22px;color:#000;transform:scaleX(0.9343);transform-origin:100% 0;">Cut Spec</div>
<div style="left:632px;top:1365px;width:260px;height:45px;background:#f0f0f0;border:2px solid #d9d9d9;box-sizing:border-box"></div>
<svg style="left:865.5px;top:1382.5px" width="13.5" height="10" viewBox="0 0 13.5 10" fill="none" stroke="#c2c2c2" stroke-width="1.9"><path d="M2 2 L6.75 7 L11.5 2"/></svg>
<div class="t" style="right:2391.5px;top:1438.4px;font-family:'Liberation Sans',sans-serif;font-weight:700;font-style:normal;font-size:22px;color:#000;transform:scaleX(0.9515);transform-origin:100% 0;">Pass Rate Table</div>
<div style="left:632px;top:1425px;width:260px;height:45px;background:#f0f0f0;border:2px solid #d9d9d9;box-sizing:border-box"></div>
<svg style="left:865.5px;top:1442.5px" width="13.5" height="10" viewBox="0 0 13.5 10" fill="none" stroke="#c2c2c2" stroke-width="1.9"><path d="M2 2 L6.75 7 L11.5 2"/></svg>
<div class="t" style="right:1771.6px;top:1138.4px;font-family:'Liberation Sans',sans-serif;font-weight:700;font-style:normal;font-size:22px;color:#000;transform:scaleX(0.9883);transform-origin:100% 0;">Tank Product</div>
<div style="left:1254px;top:1135px;width:27.5px;height:26px;background:#e6e6e6;border:2px solid #bcbcbc;box-sizing:border-box"></div>
<div class="t" style="right:1771.6px;top:1198.4px;font-family:'Liberation Sans',sans-serif;font-weight:700;font-style:normal;font-size:22px;color:#000;transform:scaleX(0.9770);transform-origin:100% 0;">Product</div>
<div style="left:1252px;top:1185px;width:320px;height:45px;background:#f0f0f0;border:2px solid #d9d9d9;box-sizing:border-box"></div>
<svg style="left:1545.5px;top:1202.5px" width="13.5" height="10" viewBox="0 0 13.5 10" fill="none" stroke="#c2c2c2" stroke-width="1.9"><path d="M2 2 L6.75 7 L11.5 2"/></svg>
<div class="t" style="right:1771.6px;top:1258.4px;font-family:'Liberation Sans',sans-serif;font-weight:700;font-style:normal;font-size:22px;color:#000;transform:scaleX(0.9702);transform-origin:100% 0;">Sizing Table</div>
<div style="left:1252px;top:1245px;width:320px;height:45px;background:#f0f0f0;border:2px solid #d9d9d9;box-sizing:border-box"></div>
<svg style="left:1545.5px;top:1262.5px" width="13.5" height="10" viewBox="0 0 13.5 10" fill="none" stroke="#c2c2c2" stroke-width="1.9"><path d="M2 2 L6.75 7 L11.5 2"/></svg>
<div class="t" style="right:1771.6px;top:1318.4px;font-family:'Liberation Sans',sans-serif;font-weight:700;font-style:normal;font-size:22px;color:#000;transform:scaleX(0.9699);transform-origin:100% 0;">Selection Table</div>
<div style="left:1252px;top:1305px;width:320px;height:45px;background:#f0f0f0;border:2px solid #d9d9d9;box-sizing:border-box"></div>
<svg style="left:1545.5px;top:1322.5px" width="13.5" height="10" viewBox="0 0 13.5 10" fill="none" stroke="#c2c2c2" stroke-width="1.9"><path d="M2 2 L6.75 7 L11.5 2"/></svg>
<div class="t" style="right:1771.6px;top:1378.4px;font-family:'Liberation Sans',sans-serif;font-weight:700;font-style:normal;font-size:22px;color:#000;transform:scaleX(0.9561);transform-origin:100% 0;">Child Piece Type</div>
<div style="left:1252px;top:1365px;width:320px;height:45px;background:#f0f0f0;border:2px solid #d9d9d9;box-sizing:border-box"></div>
<svg style="left:1545.5px;top:1382.5px" width="13.5" height="10" viewBox="0 0 13.5 10" fill="none" stroke="#c2c2c2" stroke-width="1.9"><path d="M2 2 L6.75 7 L11.5 2"/></svg>
<div class="t" style="right:1771.6px;top:1438.4px;font-family:'Liberation Sans',sans-serif;font-weight:700;font-style:normal;font-size:22px;color:#000;transform:scaleX(0.9835);transform-origin:100% 0;">Effective Date</div>
<div style="left:1252px;top:1425px;width:320px;height:46px;background:#fff;border:2px solid #8f9db3;box-sizing:border-box"></div>
<div class="t" style="left:1260.0px;top:1437.9px;font-family:'Liberation Sans',sans-serif;font-weight:400;font-style:normal;font-size:22px;color:#b8b8b8;transform:scaleX(0.9655);transform-origin:0 0;">Select a date</div>
<svg style="left:1520px;top:1432px" width="40" height="34" viewBox="0 0 40 34"><defs><linearGradient id="cg1" x1="0" y1="0" x2="0" y2="1"><stop offset="0" stop-color="#fff"/><stop offset="1" stop-color="#dfe3e8"/></linearGradient></defs><rect x="1" y="1" width="38" height="32" fill="url(#cg1)" stroke="#c9c9c9" stroke-width="1.8"/><rect x="1.9" y="1.2" width="36.2" height="7.8" fill="#cfdcee"/><rect x="1" y="8.6" width="38" height="1.4" fill="#c4c8ce"/><circle cx="19.8" cy="4.9" r="2.6" fill="#fff"/><text x="20" y="29.2" text-anchor="middle" font-family="Liberation Sans,sans-serif" font-weight="700" font-size="19" fill="#b5b5b5" textLength="24" lengthAdjust="spacingAndGlyphs">15</text></svg>
<div class="t" style="right:1771.6px;top:1498.4px;font-family:'Liberation Sans',sans-serif;font-weight:700;font-style:normal;font-size:22px;color:#000;transform:scaleX(0.9858);transform-origin:100% 0;">Proxy Demand Only</div>
<div style="left:1254px;top:1495px;width:27.5px;height:26px;background:#e6e6e6;border:2px solid #bcbcbc;box-sizing:border-box"></div>
</body></html>
